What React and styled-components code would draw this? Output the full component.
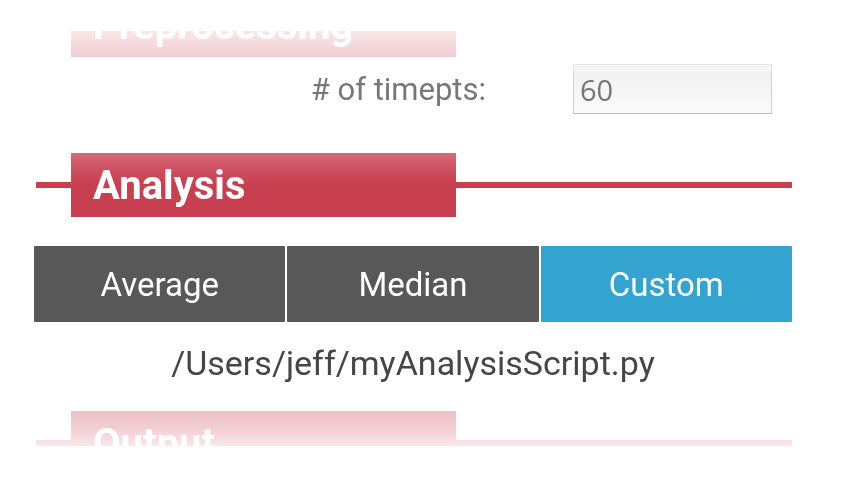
import React, { useLayoutEffect, useRef } from "react";
import styled, { createGlobalStyle } from "styled-components";

const GlobalStyle = createGlobalStyle`
  html, body {
    margin: 0;
    padding: 0;
    background: #ffffff;
    font-family: Roboto, "Liberation Sans", sans-serif;
  }
`;

const modes = ["Average", "Median", "Custom"];

const App = () => {
  const scrollRef = useRef(null);

  useLayoutEffect(() => {
    if (scrollRef.current) scrollRef.current.scrollTop = 38;
  }, []);

  return (
    <>
      <GlobalStyle />
      <Page>
        <Scroller ref={scrollRef}>
          <Section>
            <SectionHeader>
              <HeaderTab>Preprocessing</HeaderTab>
            </SectionHeader>
            <FieldRow>
              <FieldLabel># of timepts:</FieldLabel>
              <FieldInput defaultValue="60" readOnly />
            </FieldRow>
          </Section>

          <Section>
            <SectionHeader>
              <HeaderTab>Analysis</HeaderTab>
            </SectionHeader>
            <ModeBar>
              {modes.map((m) => (
                <ModeButton key={m} $active={m === "Custom"}>
                  {m}
                </ModeButton>
              ))}
            </ModeBar>
            <ScriptPath>/Users/jeff/myAnalysisScript.py</ScriptPath>
          </Section>

          <Section>
            <SectionHeader>
              <HeaderTab>Output</HeaderTab>
            </SectionHeader>
          </Section>
        </Scroller>
      </Page>
    </>
  );
};

export default App;

const fade = `linear-gradient(
    to bottom,
    rgba(0, 0, 0, 0.12) 0px,
    rgba(0, 0, 0, 0.27) 26px,
    #000 46px,
    #000 calc(100% - 60px),
    rgba(0, 0, 0, 0.42) calc(100% - 35px),
    rgba(0, 0, 0, 0.12) 100%
  )`;

const Page = styled.div`
  width: 856px;
  height: 500px;
  padding-top: 31px;
  box-sizing: border-box;
`;

const Scroller = styled.div`
  margin-left: 34px;
  width: 758px;
  height: 415px;
  overflow: hidden;
  -webkit-mask-image: ${fade};
  mask-image: ${fade};
`;

const Section = styled.section`
  display: flex;
  flex-direction: column;
  padding-bottom: 28px;
`;

const SectionHeader = styled.div`
  display: flex;
  align-items: center;
  padding-left: 2px;

  &::before,
  &::after {
    content: "";
    height: 6px;
    background: #c8404f;
  }
  &::before {
    width: 35px;
  }
  &::after {
    flex: 1;
  }
`;

const HeaderTab = styled.h2`
  margin: 0;
  width: 385px;
  height: 64px;
  box-sizing: border-box;
  padding-left: 22px;
  display: flex;
  align-items: center;
  background: linear-gradient(to bottom, #d56a77 0%, #cc4c5c 30%, #c8404f 50%, #c8404f 100%);
  color: #ffffff;
  font-family: Roboto, "Liberation Sans", sans-serif;
  font-weight: 700;
  font-size: 40px;
`;

const FieldRow = styled.div`
  display: flex;
  align-items: center;
  gap: 87px;
  margin-top: 7px;
  margin-bottom: 11px;
`;

const FieldLabel = styled.label`
  width: 452px;
  text-align: right;
  font-size: 31px;
  color: #777777;
`;

const FieldInput = styled.input`
  width: 199px;
  height: 50px;
  box-sizing: border-box;
  padding: 0 6px;
  border: 1px solid #d2d2d2;
  border-bottom-color: #bdbdbd;
  background: linear-gradient(to bottom, #efefef, #fbfbfb);
  font-family: "Open Sans", "DejaVu Sans", sans-serif;
  font-size: 29px;
  color: #777777;
  outline: none;
`;

const ModeBar = styled.div`
  display: grid;
  grid-template-columns: repeat(3, 1fr);
  gap: 2px;
  margin-top: 29px;
`;

const ModeButton = styled.button`
  height: 76px;
  border: none;
  border-radius: 1px;
  background: ${(p) => (p.$active ? "#33a3cf" : "#585858")};
  color: #ffffff;
  font-family: Roboto, "Liberation Sans", sans-serif;
  font-size: 33px;
  font-weight: 400;
  cursor: pointer;
`;

const ScriptPath = styled.p`
  margin: 21px 0 0;
  text-align: center;
  font-size: 34px;
  line-height: 40px;
  color: #464646;
`;
